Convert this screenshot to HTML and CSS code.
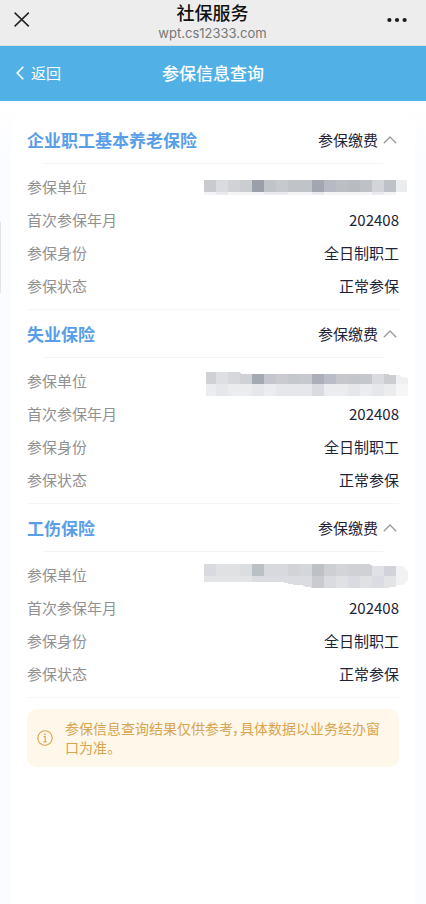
FILE: index.html
```html
<!DOCTYPE html>
<html lang="zh-CN">
<head>
<meta charset="utf-8">
<meta name="viewport" content="width=device-width, initial-scale=1">
<title>社保服务</title>
<link rel="stylesheet" href="styles.css">
</head>
<body>
<header class="browser-bar">
  <button class="icon-button" type="button" aria-label="关闭">
    <svg width="16" height="16" viewBox="0 0 16 16" fill="none" stroke="#222" stroke-width="1.5"><path d="M.6.6 14.8 14.4M14.8.6.6 14.4"/></svg>
  </button>
  <div class="site">
    <div class="site-name">社保服务</div>
    <div class="site-host">wpt.cs12333.com</div>
  </div>
  <button class="icon-button icon-button-end" type="button" aria-label="更多">
    <svg width="20" height="6" viewBox="0 0 20 6" fill="#1a1a1a"><circle cx="2.4" cy="3" r="2.1"/><circle cx="10" cy="3" r="2.1"/><circle cx="17.6" cy="3" r="2.1"/></svg>
  </button>
</header>
<nav class="nav-bar">
  <a class="back" href="#">
    <svg width="8" height="14" viewBox="0 0 8 14" fill="none" stroke="#fff" stroke-width="1.6"><path d="M7.3.7 1.2 7l6.1 6.3"/></svg>
    返回
  </a>
  <h1 class="nav-title">参保信息查询</h1>
</nav>
<main class="page">
  <span class="scroll-mark"></span>
  <div class="card">
    <section class="insurance">
      <div class="insurance-head">
        <h2 class="insurance-name">企业职工基本养老保险</h2>
        <button class="toggle" type="button" aria-expanded="true">参保缴费
          <svg width="14" height="8" viewBox="0 0 14 8" fill="none" stroke="#999" stroke-width="1.3"><path d="M.8 7.2 7 1l6.2 6.2"/></svg>
        </button>
      </div>
      <dl class="details">
        <div class="row"><dt>参保单位</dt><dd class="masked">
          <svg width="204" height="30" viewBox="0 -1 204 30" shape-rendering="crispEdges" role="img" aria-label="已隐藏">
            <path fill="#c9cacf" d="M0 7h12v12H0z"/><path fill="#dadbe0" d="M12 7h12v12H12z"/><path fill="#d1d2d6" d="M24 7h12v12H24z"/><path fill="#cccdd1" d="M36 7h12v12H36z"/><path fill="#9b9fa9" d="M48 7h12v12H48z"/><path fill="#c0c3c8" d="M60 7h12v12H60z"/><path fill="#c6c9ce" d="M72 7h12v12H72z"/><path fill="#c0c3c7" d="M84 7h24v12H84z"/><path fill="#a2a6b0" d="M108 7h12v12h-12z"/><path fill="#b7bac5" d="M120 7h12v12h-12z"/><path fill="#bbbec3" d="M132 7h12v12h-12z"/><path fill="#b8bbc0" d="M144 7h12v12h-12z"/><path fill="#bec1c6" d="M156 7h12v12h-12z"/><path fill="#d3d4d9" d="M168 7h12v12h-12z"/><path fill="#bec1c6" d="M180 7h12v12h-12z"/><path fill="#ebecee" d="M192 7h11v12h-11z"/>
            <path fill="#f4f5f6" d="M0 19h192v3H0z"/><path fill="#ebebef" d="M12 19h12v3H12zM60 19h24v3H60zM108 19h12v3h-12zM168 19h12v3h-12z"/>
          </svg></dd></div>
        <div class="row"><dt>首次参保年月</dt><dd>202408</dd></div>
        <div class="row"><dt>参保身份</dt><dd>全日制职工</dd></div>
        <div class="row"><dt>参保状态</dt><dd>正常参保</dd></div>
      </dl>
    </section>
    <section class="insurance">
      <div class="insurance-head">
        <h2 class="insurance-name">失业保险</h2>
        <button class="toggle" type="button" aria-expanded="true">参保缴费
          <svg width="14" height="8" viewBox="0 0 14 8" fill="none" stroke="#999" stroke-width="1.3"><path d="M.8 7.2 7 1l6.2 6.2"/></svg>
        </button>
      </div>
      <dl class="details">
        <div class="row"><dt>参保单位</dt><dd class="masked">
          <svg width="204" height="30" viewBox="0 -1 204 30" shape-rendering="crispEdges" role="img" aria-label="已隐藏">
            <path fill="#d0d1d5" d="M2 5h10v12H2z"/><path fill="#dedfe2" d="M12 5h12v12H12z"/><path fill="#d7d8dc" d="M24 5h12v12H24z"/><path fill="#d0d1d5" d="M34 5v1h3v1h11v10H36V5z"/><path fill="#a4aab0" d="M48 7h12v10H48z"/><path fill="#c5c6cd" d="M60 7h12v10H60z"/><path fill="#cacbd0" d="M72 7h12v10H72z"/><path fill="#c5c8cc" d="M84 7h12v10H84z"/><path fill="#c8c9ce" d="M96 7h12v10H96z"/><path fill="#acafb9" d="M108 7h12v10h-12z"/><path fill="#babdc8" d="M120 7h12v10h-12z"/><path fill="#c6c7cd" d="M132 7h12v10h-12z"/><path fill="#c3c6ca" d="M144 7h12v10h-12z"/><path fill="#c6c7cc" d="M156 7h12v10h-12z"/><path fill="#dadbe0" d="M168 7h12v10h-12z"/><path fill="#cccdd1" d="M180 7h5v1h7v9h-12z"/><path fill="#f0f0f2" d="M192 8h4v1h1v1h5v1h2v6h-12z"/>
            <path fill="#ebecee" d="M2 17h190v12H2z"/><path fill="#e6e7ea" d="M12 17h12v12H12zM48 17h12v12H48zM72 17h36v12H72zM144 17h12v12h-12zM168 17h12v12h-12z"/><path fill="#dadbe0" d="M108 17h12v12h-12z"/><path fill="#f6f6f7" d="M192 17h12v12h-12z"/>
          </svg></dd></div>
        <div class="row"><dt>首次参保年月</dt><dd>202408</dd></div>
        <div class="row"><dt>参保身份</dt><dd>全日制职工</dd></div>
        <div class="row"><dt>参保状态</dt><dd>正常参保</dd></div>
      </dl>
    </section>
    <section class="insurance">
      <div class="insurance-head">
        <h2 class="insurance-name">工伤保险</h2>
        <button class="toggle" type="button" aria-expanded="true">参保缴费
          <svg width="14" height="8" viewBox="0 0 14 8" fill="none" stroke="#999" stroke-width="1.3"><path d="M.8 7.2 7 1l6.2 6.2"/></svg>
        </button>
      </div>
      <dl class="details">
        <div class="row"><dt>参保单位</dt><dd class="masked">
          <svg width="204" height="30" viewBox="0 -1 204 30" shape-rendering="crispEdges" role="img" aria-label="已隐藏">
            <path fill="#d9dadf" d="M0 3h12v12H0z"/><path fill="#e0e1e3" d="M12 3h24v12H12z"/><path fill="#dcddde" d="M36 3h12v12H36z"/><path fill="#bbc0c5" d="M48 3h12v12H48z"/><path fill="#d8d9de" d="M60 3h24v12H60z"/><path fill="#d2d3d7" d="M84 3h12v12H84z"/><path fill="#d5d6da" d="M96 3h12v12H96z"/><path fill="#bdc1c6" d="M108 3h12v12h-12z"/><path fill="#cecfd3" d="M120 3h12v12h-12z"/><path fill="#d3d4d8" d="M132 3h12v12h-12z"/><path fill="#d0d1d5" d="M144 3h22v1h2v11h-24z"/><path fill="#dfe1e6" d="M168 5h12v10h-12z"/><path fill="#d2d3d8" d="M180 5h12v10h-12z"/><path fill="#f1f2f4" d="M192 5h7v1h2v2h2v2h1v9h-1v2h-2v2h-2v1h-7z"/>
            <path fill="#e3e4e6" d="M0 15h48v6H0z"/><path fill="#dbdcdf" d="M48 15h24v6H48z"/><path fill="#dadce1" d="M72 15h36v12h-1v-1h-6v-1h-2v-1H89v-1h-5v-1h-4v-1h-8z"/><path fill="#cacbd0" d="M108 15h12v12h-12z"/><path fill="#dadbe0" d="M120 15h12v12h-12zM144 15h12v12h-12z"/><path fill="#e0e1e3" d="M132 15h12v12h-12zM156 15h12v12h-12z"/><path fill="#dadce1" d="M168 15h12v12h-12z"/><path fill="#e3e4e6" d="M180 15h12v11h-6v1h-6z"/>
          </svg></dd></div>
        <div class="row"><dt>首次参保年月</dt><dd>202408</dd></div>
        <div class="row"><dt>参保身份</dt><dd>全日制职工</dd></div>
        <div class="row"><dt>参保状态</dt><dd>正常参保</dd></div>
      </dl>
    </section>
    <aside class="notice">
      <svg class="notice-icon" width="16" height="16" viewBox="0 0 16 16" fill="none" stroke="#d8a550" stroke-width="1.1"><circle cx="8" cy="8" r="7.2"/><path d="M6.6 6.6h1.6v5M6.4 11.7h3.4"/><circle cx="8" cy="4.3" r=".9" fill="#d8a550" stroke="none"/></svg>
      <p class="notice-text">参保信息查询结果仅供参考，具体数据以业务经办窗口为准。</p>
    </aside>
  </div>
</main>
</body>
</html>
```
FILE: styles.css
```css
* {
  box-sizing: border-box;
}

body {
  margin: 0;
  min-height: 100vh;
  display: flex;
  flex-direction: column;
  background: #fff;
  color: #1d2439;
  font-family: "Noto Sans CJK SC", sans-serif;
  font-size: 15px;
  line-height: 24px;
}

h1, h2, p, dl, dd {
  margin: 0;
}

button {
  padding: 0;
  border: 0;
  background: none;
  color: inherit;
  font: inherit;
}

svg {
  display: block;
  flex: none;
}

.browser-bar {
  display: grid;
  grid-template-columns: 40px 1fr 40px;
  align-items: start;
  height: 46px;
  padding: 0 19px 0 14px;
  border-bottom: 1px solid #dcdfe2;
  background: #ededed;
}

.icon-button {
  display: flex;
  align-items: center;
  height: 40px;
}

.icon-button-end {
  justify-content: flex-end;
}

.site {
  padding-left: 4px;
  text-align: center;
}

.site-name {
  color: #111;
  font-size: 18px;
  font-weight: 500;
  line-height: 25px;
}

.site-host {
  color: #777;
  font-family: Inter, sans-serif;
  font-size: 13px;
  line-height: 16px;
}

.nav-bar {
  display: grid;
  grid-template-columns: 1fr auto 1fr;
  align-items: center;
  height: 55px;
  padding: 0 16px 2px;
  background: #51b1e6;
  color: #fff;
}

.back {
  display: flex;
  align-items: center;
  gap: 7px;
  color: inherit;
  text-decoration: none;
}

.nav-title {
  font-size: 17px;
  font-weight: 500;
}

.page {
  position: relative;
  flex: 1;
  display: flex;
  padding: 15px 11px 0;
  background: linear-gradient(#fff, #fbfcff 60px);
}

.scroll-mark {
  position: absolute;
  top: 121px;
  left: 0;
  width: 1px;
  height: 71px;
  background: #e3e4e6;
}

.card {
  flex: 1;
  padding: 0 16px;
  border-radius: 12px 12px 0 0;
  background: #fff;
}

.insurance {
  border-bottom: 1px solid #f5f6f7;
}

.insurance-head {
  display: flex;
  align-items: center;
  justify-content: space-between;
  height: 47px;
  padding-right: 2px;
}

.insurance-name {
  color: #589ee8;
  font-size: 17px;
  font-weight: 700;
}

.toggle {
  display: flex;
  align-items: center;
  gap: 5px;
}

.details {
  padding-bottom: 7px;
}

.details::before {
  content: "";
  display: block;
  height: 1px;
  margin: 0 16px 6px;
  background: #f3f4f5;
}

.row {
  display: flex;
  align-items: center;
  justify-content: space-between;
  height: 33px;
}

.row dt {
  color: #919191;
}

.masked {
  margin-right: -9px;
}

.notice {
  display: flex;
  align-items: center;
  gap: 12px;
  margin-top: 11px;
  padding: 10px;
  border-radius: 10px;
  background: #fef7ea;
}

.notice-text {
  color: #d8a550;
  font-size: 14px;
  line-height: 19px;
  font-feature-settings: "palt";
}
```
